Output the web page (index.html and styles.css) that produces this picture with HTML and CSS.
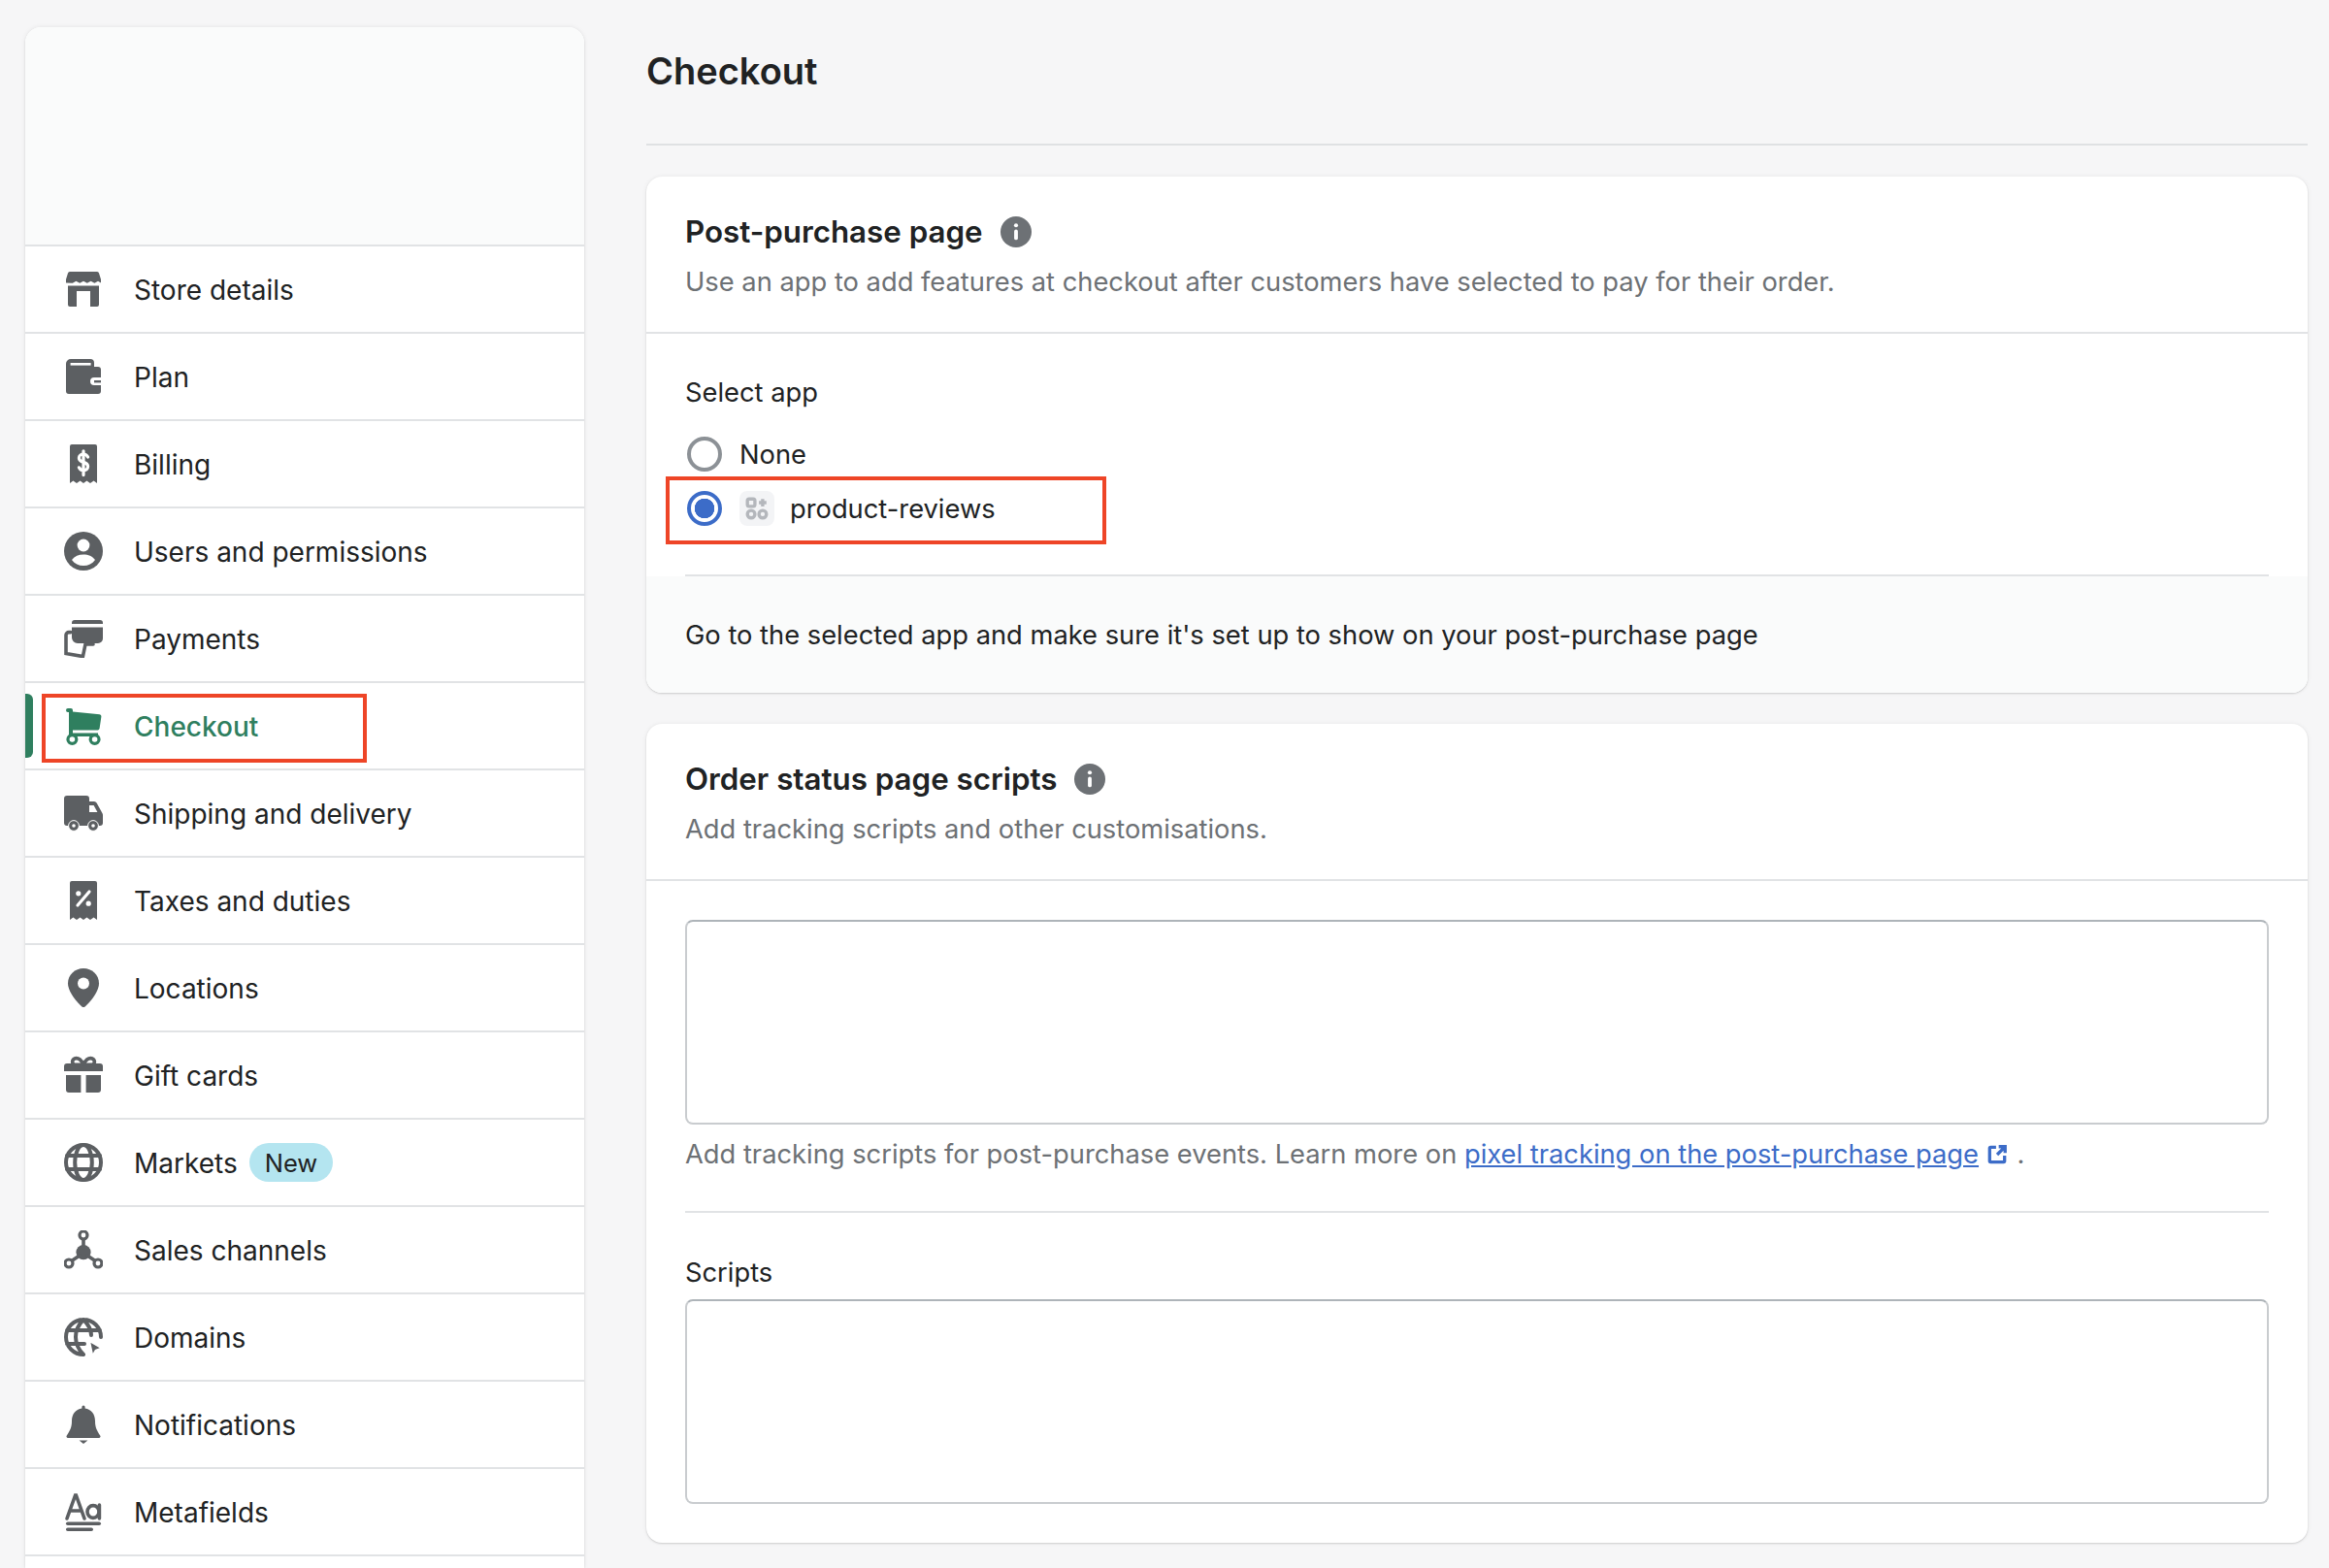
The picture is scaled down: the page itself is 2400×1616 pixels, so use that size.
FILE: index.html
```html
<!DOCTYPE html>
<html lang="en">
<head>
<meta charset="UTF-8" />
<title>Checkout settings</title>
<link rel="stylesheet" href="styles.css">
</head>
<body>
<nav class="sidebar">
  <div class="sidebar-top"></div>

  <a class="nav-row">
    <svg class="nav-icon" viewBox="0 0 20 20"><path d="M3 1h14a1 1 0 0 1 1 .8L19 5v1.8l-1.500-.9-1.800 1-1.900-1-1.900 1-1.900-1-1.900 1-1.900-1-1.800 1L1 6.800V5l1-3.200A1 1 0 0 1 3 1z"/><path d="M2 8.200h16V18a1 1 0 0 1-1 1h-3.500v-8h-7v8H3a1 1 0 0 1-1-1z"/></svg>
    <span>Store details</span>
  </a>
  <a class="nav-row">
    <svg class="nav-icon" viewBox="0 0 20 20"><path d="M3.500 1h10A2 2 0 0 1 15.500 3v2h2A1.500 1.500 0 0 1 19 6.500V10.500h-3.500a2 2 0 0 0 0 4H19v3a1.500 1.500 0 0 1-1.500 1.500h-15A1.500 1.500 0 0 1 1 17.500v-14A2.500 2.500 0 0 1 3.500 1z"/><rect x="3.300" y="3" width="10.500" height="1.300" fill="#fff"/><rect x="15.500" y="12" width="3.500" height="1.200"/></svg>
    <span>Plan</span>
  </a>
  <a class="nav-row">
    <svg class="nav-icon" viewBox="0 0 20 20"><path d="M4 0h12a1 1 0 0 1 1 1v19l-1.700-1.300-1.800 1.300-1.800-1.300-1.700 1.300-1.700-1.300-1.800 1.300-1.800-1.300L3 20V1a1 1 0 0 1 1-1z"/><path class="cut" d="M12.300 6.500C11.800 5.500 11 5 10 5c-1.300 0-2.300.8-2.300 2s1 1.800 2.300 2.200 2.300 1 2.300 2.200-1 2-2.300 2c-1 0-1.800-.5-2.300-1.500M10 3.400v12.400"/></svg>
    <span>Billing</span>
  </a>
  <a class="nav-row">
    <svg class="nav-icon" viewBox="0 0 20 20"><circle cx="10" cy="10" r="10"/><circle cx="10" cy="7" r="3.200" fill="#fff"/><path fill="#fff" d="M4 14.500c1.500-2 3.500-2.800 6-2.800s4.500.8 6 2.800c-1.500 2-3.500 3-6 3s-4.500-1-6-3z"/></svg>
    <span>Users and permissions</span>
  </a>
  <a class="nav-row">
    <svg class="nav-icon" viewBox="0 0 20 20"><path d="M5.500.5h13A1.500 1.500 0 0 1 20 2v.5H4V2A1.500 1.500 0 0 1 5.500.5z"/><path d="M4 4.200h16V10a2.500 2.500 0 0 1-2.500 2.500H7a3 3 0 0 1-3-3z"/><path class="outline" d="M3.500 6.800H2.500A1.500 1.500 0 0 0 1 8.300v9.400l8.700 1.600 1.300-6.300H15"/></svg>
    <span>Payments</span>
  </a>
  <a class="nav-row active">
    <svg class="nav-icon" viewBox="0 0 20 20"><path d="M2 1h1.500a1 1 0 0 1 1 1v.8l13.800 1.300a1 1 0 0 1 .9 1.100l-.9 6.200a1 1 0 0 1-1 .8H4.500v1.500h13V15.500H3.500a1 1 0 0 1-1-1V3H2a1 1 0 0 1 0-2z"/><circle class="wheel" cx="4.200" cy="17" r="2.200"/><circle class="wheel" cx="15.800" cy="17" r="2.200"/></svg>
    <span>Checkout</span>
    <i class="active-bar"></i>
  </a>
  <a class="nav-row">
    <svg class="nav-icon" viewBox="0 0 20 20"><path d="M1.500 1h10A1.500 1.500 0 0 1 13 2.500V4h2.500a1.500 1.500 0 0 1 1.300.8L19.700 10a2 2 0 0 1 .3 1v4a1.500 1.500 0 0 1-1.500 1.500h-17A1.500 1.500 0 0 1 0 15V2.500A1.500 1.500 0 0 1 1.500 1z"/><path fill="#fff" d="M13 6h2.300l1.900 3.500H13z"/><circle cx="5" cy="16.500" r="2.700" stroke="#fff" stroke-width=".5"/><circle cx="5" cy="16.500" r=".9" fill="#fff"/><circle cx="15" cy="16.500" r="2.700" stroke="#fff" stroke-width=".5"/><circle cx="15" cy="16.500" r=".9" fill="#fff"/></svg>
    <span>Shipping and delivery</span>
  </a>
  <a class="nav-row">
    <svg class="nav-icon" viewBox="0 0 20 20"><path d="M4 0h12a1 1 0 0 1 1 1v19l-1.700-1.300-1.800 1.300-1.800-1.300-1.700 1.300-1.700-1.300-1.800 1.300-1.800-1.300L3 20V1a1 1 0 0 1 1-1z"/><path class="cut" d="M13 5.500 7 12.500"/><circle cx="7.400" cy="6.400" r="1.300" fill="#fff"/><circle cx="12.600" cy="11.600" r="1.300" fill="#fff"/></svg>
    <span>Taxes and duties</span>
  </a>
  <a class="nav-row">
    <svg class="nav-icon" viewBox="0 0 20 20"><path d="M10 0c4.400 0 8 3.400 8 7.700 0 4.200-4.300 9.400-7.200 12a1.200 1.200 0 0 1-1.600 0C6.300 17.100 2 11.900 2 7.700 2 3.400 5.600 0 10 0z"/><circle cx="10" cy="7.800" r="3" fill="#fff"/></svg>
    <span>Locations</span>
  </a>
  <a class="nav-row">
    <svg class="nav-icon" viewBox="0 0 20 20"><path d="M0 5.500A1.500 1.500 0 0 1 1.500 4h17A1.500 1.500 0 0 1 20 5.500V8H0zM1 10h7.700v9H2.500A1.500 1.500 0 0 1 1 17.500zM11.300 10H19v7.500a1.500 1.500 0 0 1-1.500 1.500h-6.200z"/><path class="outline" d="M10 4.500C9 2.500 8 1.300 6.300 1.300 5 1.300 4.300 2.200 4.300 3.200c0 1.200 1 1.500 2.700 1.500zM10 4.500c1-2 2-3.200 3.700-3.200 1.300 0 2 .9 2 1.900 0 1.200-1 1.500-2.700 1.500z"/></svg>
    <span>Gift cards</span>
  </a>
  <a class="nav-row">
    <svg class="nav-icon" viewBox="0 0 20 20"><circle class="outline globe" cx="10" cy="10" r="9"/><ellipse class="outline globe" cx="10" cy="10" rx="4.400" ry="9"/><path class="outline globe" d="M1.500 6.500h17M1.500 13.500h17"/></svg>
    <span>Markets</span>
    <b class="badge">New</b>
  </a>
  <a class="nav-row">
    <svg class="nav-icon" viewBox="0 0 20 20"><circle cx="10" cy="11.300" r="3.800"/><path class="outline" d="M10 3v6M8 13 3.500 16M12 13l4.500 3"/><circle class="wheel" cx="10" cy="2.500" r="2"/><circle class="wheel" cx="2.500" cy="17" r="2"/><circle class="wheel" cx="17.500" cy="17" r="2"/></svg>
    <span>Sales channels</span>
  </a>
  <a class="nav-row">
    <svg class="nav-icon" viewBox="0 0 20 20"><path class="outline globe" d="M19 10a9 9 0 1 0-9 9M10 1c-2.500 2.500-4 5.500-4 9s1.500 6.500 4 9M10 1c2.500 2.500 4 5.500 4 8M1.500 6.500h17M1.500 13.500h9"/><path stroke="#fff" stroke-width="1" stroke-linejoin="round" d="M13 12 19.500 15.700 16.400 16.800 14.700 19.800z"/></svg>
    <span>Domains</span>
  </a>
  <a class="nav-row">
    <svg class="nav-icon" viewBox="0 0 20 20"><path d="M9.200 1.800V1a.8.800 0 0 1 1.600 0v.8c3.300.5 5.200 3.100 5.200 6.400 0 3.400 1 5 2.600 7.500a.8.800 0 0 1-.6 1.300H2a.8.800 0 0 1-.6-1.300C3 13.200 4 11.600 4 8.200c0-3.300 1.900-5.900 5.200-6.400zM7.800 18.200h4.400L10 20z"/></svg>
    <span>Notifications</span>
  </a>
  <a class="nav-row">
    <svg class="nav-icon" viewBox="0 0 20 20"><path class="outline" d="M1.500 13.500 5.800 1.500h.4l4.300 12M3 9.500h6"/><ellipse class="outline" cx="15" cy="10" rx="3" ry="3.200"/><path class="outline" d="M18.200 6.500v7"/><rect x="1" y="15.200" width="18" height="1.800" rx=".9"/><rect x="1" y="18.200" width="14" height="1.800" rx=".9"/></svg>
    <span>Metafields</span>
  </a>
  <div class="nav-row nav-end"></div>

  <div class="mark mark-nav"></div>
</nav>

<main class="content">
  <h1 class="page-title">Checkout</h1>

  <section class="card first-card">
    <header class="card-head">
      <h2>Post-purchase page
        <svg class="info" viewBox="0 0 20 20"><circle cx="10" cy="10" r="10"/><circle cx="10" cy="5.800" r="1.300" fill="#fff"/><rect x="8.800" y="8.500" width="2.400" height="6.700" rx="1.200" fill="#fff"/></svg>
      </h2>
      <p class="muted">Use an app to add features at checkout after customers have selected to pay for their order.</p>
    </header>
    <div class="card-body app-body">
      <p class="label">Select app</p>
      <label class="radio-row none-row"><i class="radio"></i><span>None</span></label>
      <label class="radio-row app-row">
        <i class="radio on"></i>
        <span class="app-icon">
          <svg viewBox="0 0 20 20"><rect x="3" y="3" width="5.500" height="5.500" rx="1.300"/><rect x="3" y="11.500" width="5.500" height="5.500" rx="2.700"/><rect x="11.500" y="11.500" width="5.500" height="5.500" rx="2.700"/><path d="M14.200 3v5.500M11.500 5.700H17"/></svg>
        </span>
        <span class="app-name">product-reviews</span>
        <div class="mark mark-app"></div>
      </label>
    </div>
    <footer class="card-foot">
      <p>Go to the selected app and make sure it's set up to show on your post-purchase page</p>
    </footer>
  </section>

  <section class="card second-card">
    <header class="card-head">
      <h2>Order status page scripts
        <svg class="info" viewBox="0 0 20 20"><circle cx="10" cy="10" r="10"/><circle cx="10" cy="5.800" r="1.300" fill="#fff"/><rect x="8.800" y="8.500" width="2.400" height="6.700" rx="1.200" fill="#fff"/></svg>
      </h2>
      <p class="muted">Add tracking scripts and other customisations.</p>
    </header>
    <div class="card-body scripts-body">
      <div class="field"></div>
      <p class="muted help">Add tracking scripts for post-purchase events. Learn more on <a class="link">pixel tracking on the post-purchase page</a>
        <svg class="ext" viewBox="0 0 20 20"><path d="M9 3H4A1 1 0 0 0 3 4v12a1 1 0 0 0 1 1h12a1 1 0 0 0 1-1v-5M10 10l7-7M11.500 2.500h6v6"/></svg>
        <span class="dot">.</span></p>
      <hr class="rule">
      <p class="label scripts-label">Scripts</p>
      <div class="field"></div>
    </div>
  </section>
</main>
</body>
</html>
```

FILE: styles.css
```css
* {
  box-sizing: border-box;
}
html, body {
  margin: 0;
  height: 1616px;
  overflow: hidden;
}
body {
  display: flex;
  gap: 64px;
  padding: 28px 22px 0 26px;
  background: #f6f6f7;
  color: #202223;
  font-family: Inter, "Noto Sans", sans-serif;
  font-size: 28px;
  line-height: 40px;
}
p, h1, h2 {
  margin: 0;
}

/* sidebar */
.sidebar {
  position: relative;
  flex: 0 0 576px;
  display: flex;
  flex-direction: column;
  background: #fff;
  border-radius: 16px 16px 0 0;
  box-shadow: 0 0 5px rgba(23, 24, 24, 0.08), 0 1px 2px rgba(0, 0, 0, 0.12);
}
.sidebar-top {
  height: 224px;
  background: #fafbfb;
  border-radius: 16px 16px 0 0;
}
.nav-row {
  position: relative;
  display: flex;
  align-items: center;
  flex: 0 0 90px;
  padding: 0 0 0 40px;
  border-top: 2px solid #e1e3e5;
}
.nav-row span {
  padding-top: 2px;
}
.nav-end {
  flex: 1;
}
.nav-icon {
  flex: none;
  width: 40px;
  height: 40px;
  margin-right: 32px;
  fill: #5c5f62;
}
.cut {
  fill: none;
  stroke: #fff;
  stroke-width: 1.6;
  stroke-linecap: round;
}
.outline {
  fill: none;
  stroke: #5c5f62;
  stroke-width: 1.8;
  stroke-linecap: round;
}
.globe {
  stroke-width: 2;
}
.wheel {
  fill: #fff;
  stroke: #5c5f62;
  stroke-width: 1.6;
}
.active {
  color: #2f7f5f;
  font-weight: 500;
}
.active .nav-icon {
  fill: #2f7f5f;
}
.active .wheel {
  stroke: #2f7f5f;
}
.active-bar {
  position: absolute;
  left: 0;
  top: 11px;
  width: 8px;
  height: 66px;
  background: #2f7f5f;
  border-radius: 0 6px 6px 0;
}
.badge {
  margin-left: 12px;
  padding: 1px 16px 0;
  height: 40px;
  background: #b4e5f0;
  border-radius: 20px;
  font-weight: 400;
  font-size: 25.5px;
  line-height: 39px;
}

/* red annotation boxes */
.mark {
  position: absolute;
  border: 4px solid #ee4527;
  pointer-events: none;
}
.mark-nav {
  left: 17px;
  top: 687px;
  width: 335px;
  height: 71px;
}
.mark-app {
  left: -20px;
  top: -13px;
  width: 454px;
  height: 70px;
}

/* main column */
.content {
  flex: 1;
  min-width: 0;
  font-size: 27.3px;
}
.page-title {
  height: 122px;
  padding-top: 25px;
  font-size: 38px;
  line-height: 40px;
  font-weight: 600;
  border-bottom: 2px solid #dfe1e3;
}
.card {
  background: #fff;
  border-radius: 16px;
  box-shadow: 0 0 5px rgba(23, 24, 24, 0.06), 0 1px 2px rgba(0, 0, 0, 0.14);
}
.first-card {
  margin-top: 32px;
  height: 532px;
  display: flex;
  flex-direction: column;
}
.second-card {
  margin-top: 32px;
  height: 844px;
}
.card-head {
  height: 162px;
  padding: 37px 40px 0;
  border-bottom: 2px solid #e1e3e5;
}
.card-head h2 {
  display: flex;
  align-items: center;
  gap: 18px;
  font-size: 31.3px;
  font-weight: 600;
}
.info {
  width: 32px;
  height: 32px;
  fill: #6d7175;
}
.muted {
  color: #6d7175;
}
.card-head .muted {
  margin-top: 12px;
}
.card-body {
  padding: 0 40px;
}
.app-body {
  height: 250px;
  padding-top: 41px;
}
.radio-row {
  position: relative;
  display: flex;
  align-items: center;
  height: 40px;
}
.radio-row > span:last-of-type {
  padding-top: 2px;
}
.none-row {
  margin-top: 23px;
  gap: 18px;
}
.app-row {
  margin-top: 16px;
}
.radio {
  flex: none;
  width: 36px;
  height: 36px;
  margin-left: 2px;
  background: #fff;
  border: 4px solid #8c9196;
  border-radius: 50%;
}
.radio.on {
  border-color: #3c6cc8;
  background: radial-gradient(circle, #3c6cc8 0 10px, #fff 10.5px);
}
.app-icon {
  display: flex;
  align-items: center;
  justify-content: center;
  width: 36px;
  height: 36px;
  margin: 0 16px 0 18px;
  background: #f3f4f6;
  border-radius: 8px;
}
.app-icon svg {
  width: 28px;
  height: 28px;
  fill: none;
  stroke: #b4b7bc;
  stroke-width: 2.4;
}
.card-foot {
  flex: 1;
  position: relative;
  padding: 41px 40px 0;
  background: #fafbfb;
  border-radius: 0 0 16px 16px;
}
.card-foot::before {
  content: "";
  position: absolute;
  left: 40px;
  right: 40px;
  top: -2px;
  height: 2px;
  background: #e1e3e5;
}
.scripts-body {
  padding-top: 40px;
}
.field {
  height: 211px;
  background: #fff;
  border: 2px solid #c9cccf;
  border-top-color: #aeb4b9;
  border-radius: 8px;
}
.help {
  margin-top: 11px;
  white-space: nowrap;
}
.link {
  color: #3c6cc8;
  text-decoration: underline;
}
.ext {
  width: 22px;
  height: 22px;
  vertical-align: -2px;
  fill: none;
  stroke: #3c6cc8;
  stroke-width: 3;
}
.dot {
  margin-left: 2px;
}
.rule {
  height: 2px;
  margin: 38px 0 0;
  background: #e1e3e5;
  border: 0;
}
.scripts-label {
  margin-top: 42px;
  margin-bottom: 7px;
}
```
